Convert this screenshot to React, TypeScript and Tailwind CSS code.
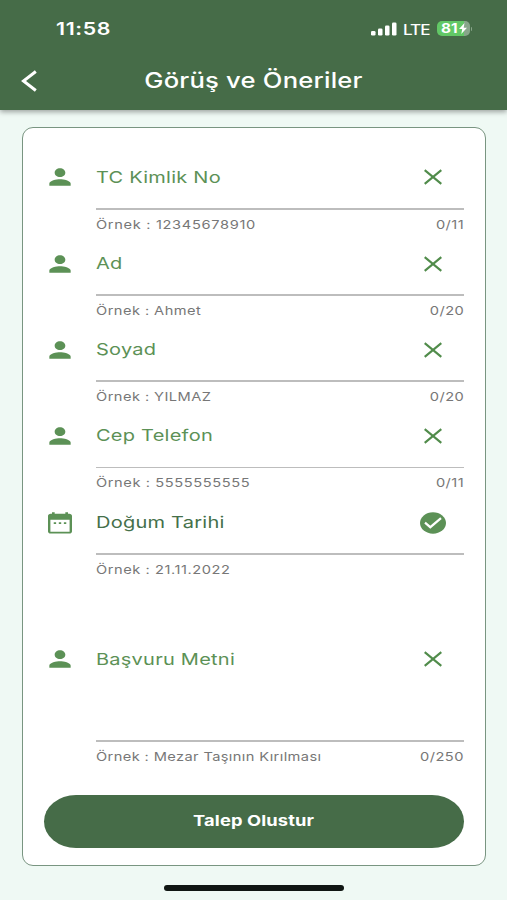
import type { ReactNode } from "react";

type IconName = "person" | "calendar";

interface FieldProps {
  icon: IconName;
  label: string;
  helper: string;
  counter?: string;
  done?: boolean;
  rowClass?: string;
  gapClass?: string;
  helperClass?: string;
}

function Wide({ children, className = "" }: { children: ReactNode; className?: string }) {
  return (
    <span className={`inline-block whitespace-pre scale-x-[1.22] ${className}`}>{children}</span>
  );
}

function FieldIcon({ name }: { name: IconName }) {
  if (name === "calendar") {
    return (
      <svg className="h-[26px] w-[32px]" viewBox="0 0 24 24" preserveAspectRatio="none" fill="#5c9156">
        <path d="M19 3.500h-1V2h-2v1.500H8V2H6v1.500H5c-1.100 0-2 .9-2 2v14.300c0 1.100.9 2 2 2h14c1.100 0 2-.9 2-2V5.500c0-1.100-.9-2-2-2Zm.2 16.500H4.800V9h14.400ZM7.300 11.200h1.800v1.800H7.300Zm3.800 0h1.800v1.800h-1.800Zm3.800 0h1.800v1.800h-1.800Z" />
      </svg>
    );
  }
  return (
    <svg className="h-[26px] w-[32px]" viewBox="0 0 24 24" preserveAspectRatio="none" fill="#5c9156">
      <path d="M12 12c2.210 0 4-1.790 4-4s-1.790-4-4-4-4 1.790-4 4 1.790 4 4 4Zm0 2c-2.670 0-8 1.340-8 4v2h16v-2c0-2.660-5.330-4-8-4Z" />
    </svg>
  );
}

function StatusIcon({ done }: { done?: boolean }) {
  if (done) {
    return (
      <svg className="h-[22px] w-[26px]" viewBox="0 0 26 22" fill="none">
        <ellipse cx="13" cy="11" rx="13" ry="10.700" fill="#5c9156" />
        <path d="m5 10.700 5.300 4.500L21 6.200" stroke="#fff" strokeWidth="2.200" />
      </svg>
    );
  }
  return (
    <svg className="h-[22px] w-[26px]" viewBox="0 0 26 22" fill="none">
      <path d="m4.700 4.100 16.600 13.800M21.300 4.100 4.700 17.900" stroke="#518c4b" strokeWidth="2.100" />
    </svg>
  );
}

function Field({
  icon,
  label,
  helper,
  counter,
  done,
  rowClass = "h-[86.300px]",
  gapClass = "h-0",
  helperClass = "tracking-[0.360px]",
}: FieldProps) {
  return (
    <div className={`flex ${rowClass}`}>
      <div className="flex h-[61px] w-[52.500px] shrink-0 items-center">
        <FieldIcon name={icon} />
      </div>
      <div className="min-w-0 flex-1">
        <div className="flex h-[61px] items-center justify-between pr-[18px]">
          <Wide className={`origin-left pb-[1px] text-[16.400px] tracking-[0.200px] ${done ? "text-[#45704a]" : "text-[#5c9156]"}`}>
            {label}
          </Wide>
          <StatusIcon done={done} />
        </div>
        <div className={gapClass} />
        <div className="h-[1.700px] bg-[#bdbdbd]" />
        <div className="flex h-[30px] items-center justify-between text-[12px] tracking-[0.360px] text-[#777]">
          <Wide className={`origin-left ${helperClass}`}>{helper}</Wide>
          {counter && <Wide className="origin-right">{counter}</Wide>}
        </div>
      </div>
    </div>
  );
}

function StatusBar() {
  return (
    <div className="flex h-[57px] items-center justify-between pl-[56px] pr-[35px] text-white">
      <Wide className="origin-left pt-[1px] text-[17.500px] font-semibold tracking-[0.500px]">11:58</Wide>
      <div className="flex h-[24px] items-center">
        <svg className="h-[14px] w-[26px]" viewBox="0 0 26 14" fill="#fff">
          <rect x="0" y="9" width="4.500" height="4.500" rx="1.300" />
          <rect x="7" y="6.500" width="4.500" height="7" rx="1.300" />
          <rect x="14" y="3.500" width="4.500" height="10" rx="1.300" />
          <rect x="21" y="0.500" width="4.500" height="13" rx="1.300" />
        </svg>
        <span className="ml-[6.500px] flex w-[26px]">
          <Wide className="origin-left pt-[1px] text-[14px] font-medium tracking-[-0.800px]">LTE</Wide>
        </span>
        <div className="ml-[7.500px] flex h-[15px] w-[33px] items-center overflow-hidden rounded-[5px] bg-[linear-gradient(90deg,#62c866_82%,#88a58a_82%)] pl-[4.500px]">
          <Wide className="w-[15px] origin-left pt-[1px] text-[12.500px] font-bold">81</Wide>
          <svg className="ml-[3px] h-[11px] w-[8px]" viewBox="0 0 8 11" fill="#fff">
            <path d="M5.500 0 0 6h3.200L2.300 11 8 4.800H4.700Z" />
          </svg>
        </div>
        <span className="ml-[1px] h-[4px] w-[1.500px] rounded-r bg-[#88a58a]" />
      </div>
    </div>
  );
}

export default function App() {
  return (
    <div className="flex h-[900px] w-[507px] flex-col overflow-hidden bg-[#eff9f4] font-['Inter','Liberation_Sans',sans-serif]">
      <header className="h-[110px] shrink-0 bg-[#466c48] shadow-[0_2px_5px_rgba(0,0,0,0.350)]">
        <StatusBar />
        <div className="grid h-[48px] grid-cols-[70px_1fr_70px] items-center text-white">
          <svg className="ml-[21px] h-[22px] w-[17px]" viewBox="0 0 17 22" fill="none">
            <path d="M14.800 1.500 2.500 11l12.300 9.500" stroke="#fff" strokeWidth="3" />
          </svg>
          <h1 className="text-center text-[21px] font-medium leading-[28px] tracking-[0.170px]">
            <Wide>Görüş ve Öneriler</Wide>
          </h1>
        </div>
      </header>

      <main className="ml-[21.500px] mt-[17.400px] flex h-[738.500px] w-[464.500px] shrink-0 flex-col rounded-[11px] border-[1.500px] border-[#799581] bg-white pl-[21px] pr-[21px] pt-[18.500px]">
        <Field icon="person" label="TC Kimlik No" helper="Örnek : 12345678910" counter="0/11" helperClass="tracking-[0.540px]" />
        <Field icon="person" label="Ad" helper="Örnek : Ahmet" counter="0/20" />
        <Field icon="person" label="Soyad" helper="Örnek : YILMAZ" counter="0/20" />
        <Field icon="person" label="Cep Telefon" helper="Örnek : 5555555555" counter="0/11" helperClass="tracking-[0.480px]" />
        <Field icon="calendar" label="Doğum Tarihi" helper="Örnek : 21.11.2022" done rowClass="h-[136.800px]" helperClass="tracking-[0.450px]" />
        <Field
          icon="person"
          label="Başvuru Metni"
          helper="Örnek : Mezar Taşının Kırılması"
          counter="0/250"
          rowClass="h-[166px]"
          gapClass="h-[50.500px]"
          helperClass="tracking-[0.310px]"
        />
        <button className="h-[53px] w-full shrink-0 rounded-[32px/26.500px] bg-[#466c48] text-[15px] font-bold tracking-[0.100px] text-white">
          <Wide>Talep Olustur</Wide>
        </button>
      </main>

      <div className="mx-auto mt-[19.600px] h-[5.500px] w-[180px] shrink-0 rounded-full bg-[#101613]" />
    </div>
  );
}
